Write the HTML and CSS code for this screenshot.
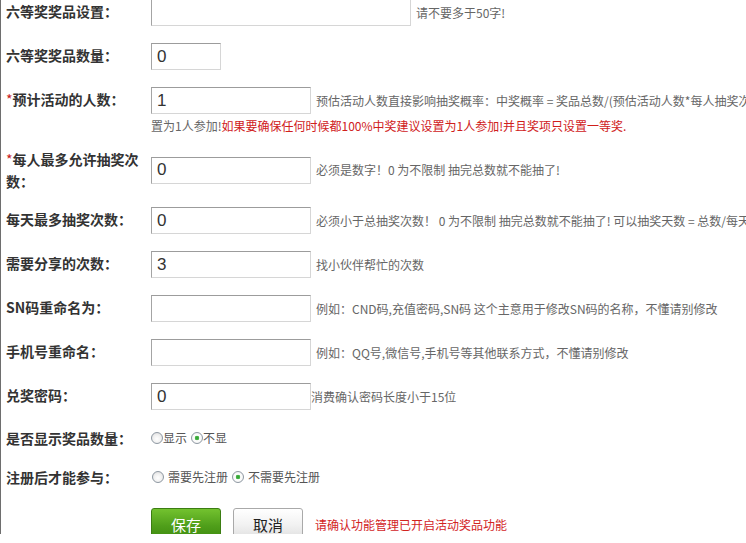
FILE: index.html
```html
<!DOCTYPE html>
<html lang="zh-CN">
<head>
<meta charset="utf-8">
<title>奖品设置</title>
<link rel="stylesheet" href="styles.css">
</head>
<body>
<div class="page">
  <div class="form">
    <div class="row">
      <div class="label">六等奖奖品设置：</div>
      <div class="field"><input class="txt txt--wide" type="text" value=""><span class="note">请不要多于50字!</span></div>
    </div>
    <div class="row">
      <div class="label">六等奖奖品数量：</div>
      <div class="field"><input class="txt txt--short" type="text" value="0"></div>
    </div>
    <div class="row row--top">
      <div class="label label--tall"><span class="req">*</span>预计活动的人数：</div>
      <div class="field field--stack">
        <div class="line"><input class="txt" type="text" value="1"><span class="note">预估活动人数直接影响抽奖概率：中奖概率 = 奖品总数/(预估活动人数*每人抽奖次数) 测试时建议设</span></div>
        <div class="note note--wrap">置为1人参加!<span class="warn">如果要确保任何时候都100%中奖建议设置为1人参加!并且奖项只设置一等奖.</span></div>
      </div>
    </div>
    <div class="row row--tight">
      <div class="label label--wrap"><span class="req">*</span>每人最多允许抽奖次数：</div>
      <div class="field"><input class="txt" type="text" value="0"><span class="note">必须是数字！0 为不限制 抽完总数就不能抽了!</span></div>
    </div>
    <div class="row">
      <div class="label">每天最多抽奖次数：</div>
      <div class="field"><input class="txt" type="text" value="0"><span class="note">必须小于总抽奖次数！ 0 为不限制 抽完总数就不能抽了! 可以抽奖天数 = 总数/每天最多抽奖次数</span></div>
    </div>
    <div class="row">
      <div class="label">需要分享的次数：</div>
      <div class="field"><input class="txt" type="text" value="3"><span class="note">找小伙伴帮忙的次数</span></div>
    </div>
    <div class="row">
      <div class="label">SN码重命名为：</div>
      <div class="field"><input class="txt" type="text" value=""><span class="note">例如：CND码,充值密码,SN码 这个主意用于修改SN码的名称，不懂请别修改</span></div>
    </div>
    <div class="row">
      <div class="label">手机号重命名：</div>
      <div class="field"><input class="txt" type="text" value=""><span class="note">例如：QQ号,微信号,手机号等其他联系方式，不懂请别修改</span></div>
    </div>
    <div class="row">
      <div class="label">兑奖密码：</div>
      <div class="field"><input class="txt" type="text" value="0"><span class="note note--flush">消费确认密码长度小于15位</span></div>
    </div>
    <div class="row row--choice">
      <div class="label">是否显示奖品数量：</div>
      <div class="field">
        <label class="opt"><input class="radio" type="radio" name="show">显示</label>
        <label class="opt opt--next"><input class="radio" type="radio" name="show" checked>不显</label>
      </div>
    </div>
    <div class="row row--choice">
      <div class="label">注册后才能参与：</div>
      <div class="field">
        <label class="opt opt--spaced opt--first"><input class="radio" type="radio" name="reg">需要先注册</label>
        <label class="opt opt--spaced opt--next"><input class="radio" type="radio" name="reg" checked>不需要先注册</label>
      </div>
    </div>
    <div class="row row--actions">
      <div class="label"></div>
      <div class="field">
        <button class="btn btn--primary" type="button">保存</button>
        <button class="btn btn--default" type="button">取消</button>
        <span class="alert">请确认功能管理已开启活动奖品功能</span>
      </div>
    </div>
  </div>
</div>
</body>
</html>
```
FILE: styles.css
```css
* {
  box-sizing: border-box;
}

html,
body {
  margin: 0;
  padding: 0;
  overflow: hidden;
  background: #fff;
}

body {
  font-family: "Noto Sans CJK SC", "Microsoft YaHei", sans-serif;
  color: #333;
}

.page {
  width: 1100px;
  height: 543px;
  border-left: 1px solid #6e6e6e;
}

.form {
  margin-top: -9px;
}

.row {
  display: flex;
  align-items: center;
  padding: 8px 0 9px;
}

.row--top {
  align-items: flex-start;
  padding-bottom: 2px;
}

.row--tight {
  padding-bottom: 7px;
}

.row--actions {
  padding-top: 11px;
}

.label {
  width: 150px;
  flex: none;
  padding: 0 5px 4px;
  font-size: 14px;
  font-weight: 700;
  line-height: 22px;
  color: #333;
}

.label--tall {
  padding-bottom: 0;
  line-height: 25px;
}

.label--wrap,
.row--choice .label,
.row--actions .label {
  padding-bottom: 0;
}

.req {
  color: #c8201c;
  font-weight: 400;
}

.field {
  display: flex;
  align-items: center;
  white-space: nowrap;
}

.field--stack {
  display: block;
}

.line {
  display: flex;
  align-items: center;
  height: 27px;
}

.txt {
  width: 160px;
  height: 27px;
  margin: 0;
  padding: 0 5px;
  border: 1px solid;
  border-color: #9c9c9c #d6d6d6 #d6d6d6 #a4a4a4;
  border-radius: 0;
  font-family: "Liberation Sans", Arial, sans-serif;
  font-size: 17px;
  color: #333;
  background: #fff;
  outline: none;
}

.txt--wide {
  width: 260px;
}

.txt--short {
  width: 70px;
}

.note {
  margin-left: 5px;
  font-size: 12px;
  line-height: 18px;
  color: #666;
}

.note--flush {
  margin-left: 0;
}

.note--wrap {
  margin-left: 0;
  line-height: 24px;
}

.warn {
  color: #d0201b;
}

.opt {
  display: inline-flex;
  align-items: center;
  font-size: 12px;
  line-height: 22px;
  color: #555;
}

.opt--spaced .radio {
  margin-right: 4px;
}

.opt--first {
  margin-left: 1px;
}

.opt--next {
  margin-left: 4px;
}

.radio {
  appearance: none;
  -webkit-appearance: none;
  width: 12px;
  height: 12px;
  margin: 0;
  border: 1px solid #8e98a2;
  border-radius: 50%;
  background: radial-gradient(circle at 50% 60%, #ffffff 0, #f2f2f2 45%, #d9d9d9 100%);
}

.radio:checked {
  background: radial-gradient(circle at 50% 50%, #2f9a2f 0, #4cb84c 2px, #ffffff 2.6px, #ededed 100%);
}

.btn {
  width: 70px;
  height: 33px;
  margin: 0;
  padding: 0;
  border-radius: 3px;
  font-family: "Noto Sans CJK SC", "Microsoft YaHei", sans-serif;
  font-size: 15px;
  line-height: 31px;
  cursor: pointer;
}

.btn--primary {
  border: 1px solid #3b7d12;
  background: linear-gradient(#73c22f, #4f9e1a 55%, #3d8a0e);
  color: #fff;
}

.btn--default {
  margin-left: 12px;
  border: 1px solid #a9a9a9;
  background: linear-gradient(#ffffff, #f2f2f2 50%, #dedede);
  color: #222;
}

.alert {
  margin-left: 12px;
  font-size: 12px;
  color: #d2241f;
}
```
